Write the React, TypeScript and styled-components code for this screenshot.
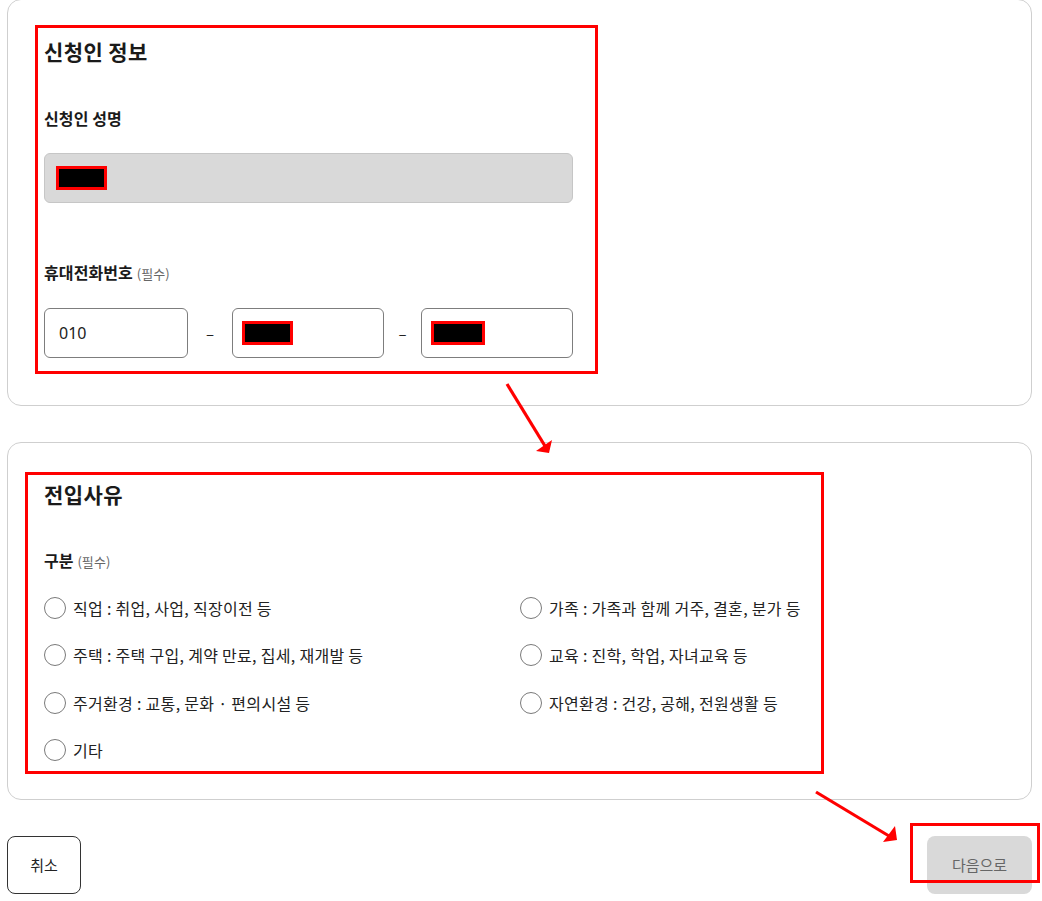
import React from 'react';
import styled, { createGlobalStyle } from 'styled-components';

const GlobalStyle = createGlobalStyle`
  html, body {
    margin: 0;
    padding: 0;
    background: #fff;
  }
  body {
    font-family: 'Noto Sans CJK KR', 'Noto Sans', sans-serif;
    color: #222;
    overflow: hidden;
  }
`;

const reasons = [
  '직업 : 취업, 사업, 직장이전 등',
  '가족 : 가족과 함께 거주, 결혼, 분가 등',
  '주택 : 주택 구입, 계약 만료, 집세, 재개발 등',
  '교육 : 진학, 학업, 자녀교육 등',
  '주거환경 : 교통, 문화 · 편의시설 등',
  '자연환경 : 건강, 공해, 전원생활 등',
  '기타',
];

// red review marks drawn over the screenshot
const marks = [
  { left: 35, top: 25, width: 563, height: 349 },
  { left: 25, top: 472, width: 799, height: 302 },
  { left: 910, top: 823, width: 130, height: 60 },
];

const App = () => {
  return (
    <Page>
      <GlobalStyle />
      <Card first>
        <Title>신청인 정보</Title>
        <Label top={42}>신청인 성명</Label>
        <ReadOnlyInput>
          <Redacted />
        </ReadOnlyInput>
        <Label top={58}>
          휴대전화번호 <Required>(필수)</Required>
        </Label>
        <PhoneRow>
          <PhoneInput>010</PhoneInput>
          <Dash>–</Dash>
          <PhoneInput>
            <Redacted />
          </PhoneInput>
          <Dash>–</Dash>
          <PhoneInput>
            <Redacted wide />
          </PhoneInput>
        </PhoneRow>
      </Card>

      <Card>
        <Title>전입사유</Title>
        <Label top={41}>
          구분 <Required>(필수)</Required>
        </Label>
        <RadioGrid>
          {reasons.map(r => (
            <RadioItem key={r}>
              <Circle />
              <span>{r}</span>
            </RadioItem>
          ))}
        </RadioGrid>
      </Card>

      <Footer>
        <CancelButton>취소</CancelButton>
        <NextButton disabled>다음으로</NextButton>
      </Footer>

      {marks.map((m, i) => (
        <Mark key={i} style={{ left: m.left, top: m.top, width: m.width, height: m.height }} />
      ))}
      <Arrows width="1042" height="901" viewBox="0 0 1042 901">
        <line x1="507" y1="384" x2="545" y2="446" stroke="#ff0000" strokeWidth="3.2" />
        <polygon points="549,453 536,451 552,440" fill="#ff0000" />
        <line x1="816" y1="792" x2="889" y2="836" stroke="#ff0000" strokeWidth="3.2" />
        <polygon points="897,840 883,842 895,826" fill="#ff0000" />
      </Arrows>
    </Page>
  );
};

const Page = styled.div`
  position: relative;
  display: flex;
  flex-direction: column;
  width: 1042px;
  height: 901px;
  padding-left: 7px;
  box-sizing: border-box;
`;

const Card = styled.section<{ first?: boolean }>`
  width: 1025px;
  box-sizing: border-box;
  border: 1px solid #cfcfcf;
  border-radius: 14px;
  padding: 37px 36px 0;
  margin-top: ${p => (p.first ? '-1px' : '36px')};
  display: flex;
  flex-direction: column;
  padding-bottom: ${p => (p.first ? '47px' : '37px')};
`;

const Title = styled.h2`
  margin: 0;
  font-size: 21px;
  line-height: 28px;
  font-weight: 700;
  letter-spacing: 0.4px;
  color: #1a1a1a;
`;

const Label = styled.div<{ top: number }>`
  margin-top: ${p => p.top}px;
  font-size: 16px;
  line-height: 22px;
  font-weight: 700;
  letter-spacing: 0.1px;
  color: #1a1a1a;
`;

const Required = styled.span`
  font-size: 13px;
  font-weight: 400;
  color: #666;
`;

const ReadOnlyInput = styled.div`
  margin-top: 24px;
  width: 529px;
  height: 50px;
  box-sizing: border-box;
  background: #d9d9d9;
  border: 1px solid #c6c6c6;
  border-radius: 6px;
  padding-left: 11px;
  display: flex;
  align-items: center;
`;

const Redacted = styled.span<{ wide?: boolean }>`
  display: inline-block;
  width: ${p => (p.wide ? '54px' : '51px')};
  height: 24px;
  box-sizing: border-box;
  background: #000;
  border: 3px solid #ff0000;
`;

const PhoneRow = styled.div`
  margin-top: 23px;
  display: grid;
  grid-template-columns: 144px 44px 152px 37px 152px;
  align-items: center;
`;

const PhoneInput = styled.div`
  height: 50px;
  box-sizing: border-box;
  border: 1px solid #7d7d7d;
  border-radius: 6px;
  padding-left: 9px;
  display: flex;
  align-items: center;
  font-size: 16px;
  color: #222;
  font-family: 'Noto Sans', 'Noto Sans CJK KR', sans-serif;

  &:first-child {
    padding-left: 14px;
  }
`;

const Dash = styled.span`
  text-align: center;
  font-size: 15px;
  color: #222;
`;

const RadioGrid = styled.div`
  margin-top: 23px;
  display: grid;
  grid-template-columns: 476px 1fr;
  grid-auto-rows: 24px;
  row-gap: 23.3px;
`;

const RadioItem = styled.label`
  display: flex;
  align-items: center;
  gap: 7px;
  font-size: 16px;
  line-height: 24px;
  letter-spacing: 0.3px;
  color: #222;
`;

const Circle = styled.span`
  width: 22px;
  height: 22px;
  box-sizing: border-box;
  border-radius: 50%;
  border: 1px solid #7a7a7a;
  background: #fff;
  flex-shrink: 0;
`;

const Footer = styled.div`
  margin-top: 36px;
  width: 1025px;
  display: flex;
  justify-content: space-between;
`;

const CancelButton = styled.button`
  width: 74px;
  height: 58px;
  border: 1px solid #333;
  border-radius: 8px;
  background: #fff;
  font-family: inherit;
  font-size: 15px;
  color: #222;
  padding: 0;
`;

const NextButton = styled.button`
  width: 105px;
  height: 58px;
  border: none;
  border-radius: 8px;
  background: #d9d9d9;
  font-family: inherit;
  font-size: 15px;
  color: #666;
  padding: 0;
`;

const Mark = styled.div`
  position: absolute;
  box-sizing: border-box;
  border: 3px solid #ff0000;
  pointer-events: none;
`;

const Arrows = styled.svg`
  position: absolute;
  left: 0;
  top: 0;
  pointer-events: none;
`;

export default App;
